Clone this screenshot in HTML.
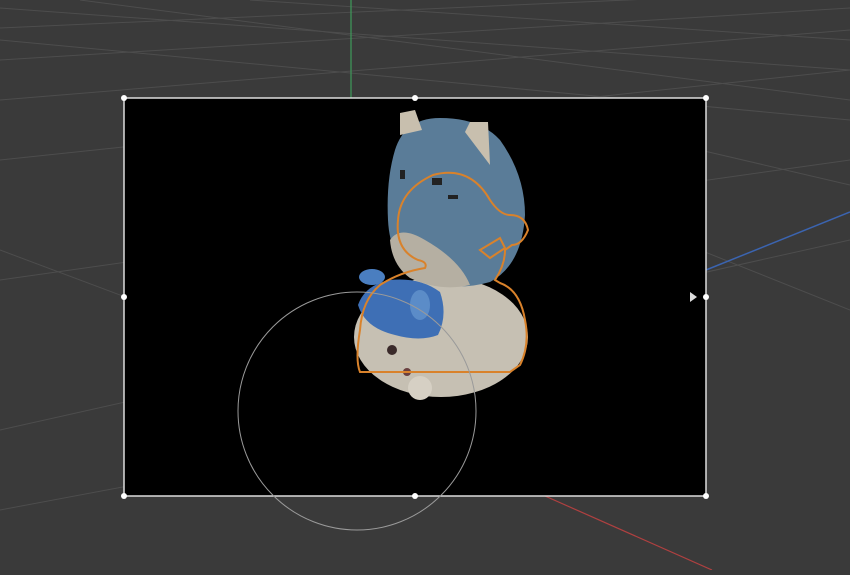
<!DOCTYPE html>
<html><head><style>html,body{margin:0;padding:0;background:#393939;overflow:hidden}</style></head>
<body>
<svg width="850" height="570" viewBox="0 0 850 570" xmlns="http://www.w3.org/2000/svg">
<rect width="850" height="570" fill="#3a3a3a"/>
<g stroke="#4d4d4d" stroke-width="1" fill="none">
<line x1="0" y1="28" x2="850" y2="-10"/>
<line x1="0" y1="60" x2="850" y2="8"/>
<line x1="0" y1="100" x2="850" y2="30"/>
<line x1="0" y1="160" x2="850" y2="70"/>
<line x1="0" y1="280" x2="850" y2="160"/>
<line x1="0" y1="430" x2="850" y2="240"/>
<line x1="0" y1="8" x2="850" y2="70"/>
<line x1="0" y1="40" x2="850" y2="120"/>
<line x1="80" y1="0" x2="850" y2="100"/>
<line x1="250" y1="0" x2="850" y2="40"/>
<line x1="0" y1="250" x2="400" y2="400"/>
<line x1="700" y1="250" x2="850" y2="310"/>
<line x1="700" y1="150" x2="850" y2="185"/>
<line x1="0" y1="510" x2="160" y2="480"/>
</g>
<line x1="351" y1="0" x2="351" y2="98" stroke="#3f9a5a" stroke-width="1.2"/>
<line x1="706" y1="270" x2="850" y2="212" stroke="#3b64b0" stroke-width="1.5"/>
<line x1="545" y1="496" x2="712" y2="570" stroke="#b04040" stroke-width="1.2"/>
<rect x="124" y="98" width="582" height="398" fill="#000" stroke="#ddd" stroke-width="1.5"/>
<!-- cat bottom -->
<ellipse cx="441" cy="337" rx="87" ry="60" fill="#c6c0b3"/>
<ellipse cx="420" cy="388" rx="12" ry="12" fill="#d6d0c4"/>
<path d="M358 305 Q365 285 390 280 Q420 277 440 292 Q448 315 438 335 Q420 342 395 335 Q365 328 358 305Z" fill="#3e6fb5"/>
<ellipse cx="372" cy="277" rx="13" ry="8" fill="#4a7ec0"/>
<ellipse cx="420" cy="305" rx="10" ry="15" fill="#5b8cc8"/>
<circle cx="392" cy="350" r="5" fill="#3a2a2a"/><circle cx="407" cy="372" r="4" fill="#6a4040"/>
<!-- cat top -->
<path d="M395 150 Q405 118 440 118 Q480 118 500 140 Q525 175 525 215 Q522 265 490 282 Q455 292 420 280 Q390 262 388 220 Q386 180 395 150Z" fill="#5a7c98"/>
<path d="M390 240 Q400 225 425 240 Q460 260 470 285 Q440 292 410 278 Q392 265 390 240Z" fill="#b5afa2"/>
<path d="M400 135 L400 113 L415 110 L422 130Z" fill="#c8bfae"/>
<path d="M465 132 L470 122 L488 122 L490 165Z" fill="#c8bfae"/>
<g fill="#222"><rect x="400" y="170" width="5" height="9"/><rect x="432" y="178" width="10" height="7"/><rect x="448" y="195" width="10" height="4"/></g>
<!-- orange outline -->
<path d="M433 175 Q470 165 490 200 Q500 215 510 215 Q525 215 528 230 Q522 245 512 245 L505 250 Q505 265 495 280 L500 283 Q520 290 525 320 Q530 345 520 365 L510 372 L360 372 Q355 360 360 330 Q362 300 380 285 Q400 272 425 268 Q428 262 418 260 Q395 250 398 220 Q400 190 433 175Z M480 250 L500 238 L505 248 L490 258Z" fill="none" stroke="#d9822b" stroke-width="2"/>
<circle cx="357" cy="411" r="119" fill="none" stroke="#9a9a9a" stroke-width="1"/>
<g fill="#fff"><circle cx="124" cy="98" r="3"/><circle cx="415" cy="98" r="3"/><circle cx="706" cy="98" r="3"/><circle cx="124" cy="297" r="3"/><circle cx="706" cy="297" r="3"/><circle cx="124" cy="496" r="3"/><circle cx="415" cy="496" r="3"/><circle cx="706" cy="496" r="3"/></g>
<path d="M690 292 L697 297 L690 302Z" fill="#ddd"/>
</svg>
</body></html>
